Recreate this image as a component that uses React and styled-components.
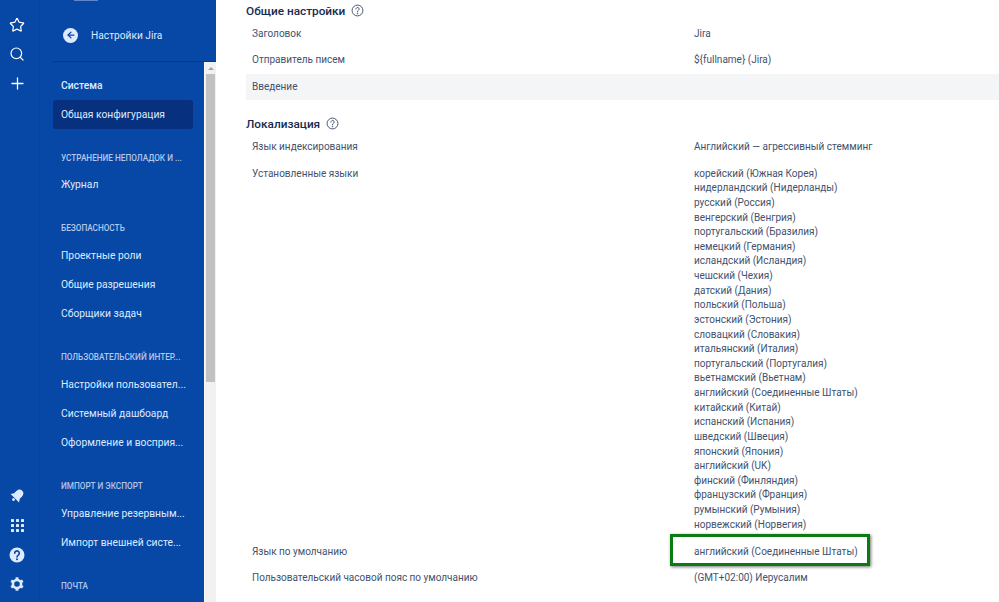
import React from "react";
import styled, { createGlobalStyle } from "styled-components";
import { Star, Search, Plus, ArrowLeft } from "lucide-react";

const Global = createGlobalStyle`
  html, body {
    margin: 0;
    padding: 0;
    background: #fff;
    font-family: Roboto, "Noto Sans", sans-serif;
  }
`;

const Page = styled.div`
  position: relative;
  display: flex;
  width: 999px;
  height: 602px;
  overflow: hidden;
`;

const Rail = styled.div`
  width: 40px;
  flex: none;
  background: #0747a6;
  box-shadow: inset -1px 0 0 #0a4299;
  display: flex;
  flex-direction: column;
  justify-content: space-between;
  padding: 10px 6px 3px 0;
  box-sizing: border-box;
`;

const RailCell = styled.div`
  height: 29.5px;
  display: flex;
  align-items: center;
  justify-content: center;
  color: #fff;
`;

const Side = styled.div`
  width: 176px;
  flex: none;
  display: flex;
  flex-direction: column;
`;

const SideHead = styled.div`
  height: 62px;
  box-sizing: border-box;
  background: #0747a6;
  display: flex;
  align-items: center;
  gap: 13px;
  padding: 8px 0 0 23px;
  color: #deebff;
  font-size: 10.2px;
  position: relative;
  overflow: hidden;
  &::before {
    content: "";
    position: absolute;
    left: 34px;
    top: 0;
    width: 24px;
    height: 1px;
    background: #5f87c6;
  }
  &::after {
    content: "";
    position: absolute;
    left: 13px;
    right: 0;
    bottom: 0;
    height: 1px;
    background: #07388a;
  }
`;

const BackDot = styled.div`
  width: 15px;
  height: 15px;
  border-radius: 50%;
  background: #deebff;
  color: #0747a6;
  display: flex;
  align-items: center;
  justify-content: center;
`;

const SideBody = styled.div`
  flex: 1;
  display: flex;
  min-height: 0;
`;

const NavList = styled.div`
  width: 164px;
  flex: none;
  background: #0747a6;
  padding: 8.6px 11px 0 13px;
  box-sizing: border-box;
  overflow: hidden;
`;

const NavItem = styled.div`
  height: 29.3px;
  display: flex;
  align-items: center;
  padding-left: 8px;
  border-radius: 3px;
  font-size: 10.3px;
  font-weight: ${(p) => (p.$strong ? 500 : 400)};
  color: #deebff;
  white-space: nowrap;
  background: ${(p) => (p.$active ? "#07317f" : "transparent")};
`;

const NavTitle = styled.div`
  height: 15px;
  margin: 21.25px 0 4.85px;
  padding-left: 8px;
  display: flex;
  align-items: center;
  font-size: 8.2px;
  font-weight: 500;
  color: #b3c8ea;
  white-space: nowrap;
`;

const Scrollbar = styled.div`
  width: 12px;
  flex: none;
  box-sizing: border-box;
  background: #f1f1f1;
  border-left: 1px solid #f8f8f8;
  display: flex;
  flex-direction: column;
  align-items: center;
`;

const ScrollArrow = styled.div`
  height: 12px;
  display: flex;
  align-items: center;
  justify-content: center;
  &::before {
    content: "";
    border-left: 3px solid transparent;
    border-right: 3px solid transparent;
    border-bottom: 3px solid #a3a3a3;
  }
`;

const ScrollThumb = styled.div`
  width: 9px;
  height: 308px;
  background: #c1c1c1;
`;

const Main = styled.div`
  flex: 1;
  min-width: 0;
  padding: 0 0 0 30px;
`;

const Heading = styled.div`
  height: 21px;
  display: flex;
  align-items: center;
  gap: 6px;
  margin-top: ${(p) => p.$top}px;
  font-size: 11.8px;
  font-weight: 500;
  color: #172b4d;
`;

const Row = styled.div`
  display: grid;
  grid-template-columns: 442px 1fr;
  padding: 6px 0 5.8px 6px;
  box-sizing: border-box;
  font-size: 10px;
  line-height: 14.63px;
  color: #42526e;
  background: ${(p) => (p.$shaded ? "#f4f5f7" : "transparent")};
`;

const LangList = styled.div`
  margin-bottom: 0.6px;
`;

const Highlight = styled.div`
  position: absolute;
  left: 670px;
  top: 534px;
  width: 200px;
  height: 32px;
  box-sizing: border-box;
  border: 3px solid #0a7a12;
  box-shadow: 1px 1px 3px rgba(0, 0, 0, 0.55);
`;

const Help = () => (
  <svg width="13" height="13" viewBox="0 0 24 24" fill="none" stroke="#42526e" strokeWidth="1.8">
    <circle cx="12" cy="12" r="10" />
    <path d="M9 9.3a3 3 0 1 1 4.6 2.5c-1 .7-1.6 1.3-1.6 2.6" strokeLinecap="round" />
    <circle cx="12" cy="17.6" r="0.6" fill="#42526e" />
  </svg>
);

const Bell = () => (
  <svg width="15" height="15" viewBox="0 0 16 16" fill="#deebff">
    <g transform="rotate(45 8 8)">
      <path d="M8 .8C5.2.8 3.8 3 3.8 5.6v3.2L1.6 12h12.8l-2.2-3.2V5.6C12.2 3 10.8.8 8 .8z" />
      <circle cx="8" cy="14" r="1.5" />
    </g>
  </svg>
);

const Apps = () => (
  <svg width="13" height="13" viewBox="0 0 13 13" fill="#deebff">
    {[0, 5, 10].flatMap((y) =>
      [0, 5, 10].map((x) => <rect key={x + "-" + y} x={x} y={y} width="3" height="3" rx="0.6" />)
    )}
  </svg>
);

const HelpSolid = () => (
  <svg width="16" height="16" viewBox="0 0 16 16">
    <circle cx="8" cy="8" r="7.5" fill="#deebff" />
    <path d="M5.7 6.2a2.3 2.3 0 1 1 3.6 1.9c-.8.5-1.3 1-1.3 1.9" fill="none" stroke="#0747a6" strokeWidth="1.6" strokeLinecap="round" />
    <circle cx="8" cy="12.2" r="1" fill="#0747a6" />
  </svg>
);

const Gear = () => (
  <svg width="14" height="14" viewBox="0 0 24 24">
    <circle cx="12" cy="12" r="7" fill="none" stroke="#deebff" strokeWidth="4.4" />
    {[0, 60, 120, 180, 240, 300].map((a) => (
      <rect key={a} x="9.5" y="0.5" width="5" height="5" fill="#deebff" transform={`rotate(${a} 12 12)`} />
    ))}
  </svg>
);

const languages = [
  "корейский (Южная Корея)",
  "нидерландский (Нидерланды)",
  "русский (Россия)",
  "венгерский (Венгрия)",
  "португальский (Бразилия)",
  "немецкий (Германия)",
  "исландский (Исландия)",
  "чешский (Чехия)",
  "датский (Дания)",
  "польский (Польша)",
  "эстонский (Эстония)",
  "словацкий (Словакия)",
  "итальянский (Италия)",
  "португальский (Португалия)",
  "вьетнамский (Вьетнам)",
  "английский (Соединенные Штаты)",
  "китайский (Китай)",
  "испанский (Испания)",
  "шведский (Швеция)",
  "японский (Япония)",
  "английский (UK)",
  "финский (Финляндия)",
  "французский (Франция)",
  "румынский (Румыния)",
  "норвежский (Норвегия)",
];

const nav = [
  { items: ["Система", "Общая конфигурация"] },
  { title: "УСТРАНЕНИЕ НЕПОЛАДОК И ...", items: ["Журнал"] },
  { title: "БЕЗОПАСНОСТЬ", items: ["Проектные роли", "Общие разрешения", "Сборщики задач"] },
  { title: "ПОЛЬЗОВАТЕЛЬСКИЙ ИНТЕР...", items: ["Настройки пользовател...", "Системный дашбоард", "Оформление и восприя..."] },
  { title: "ИМПОРТ И ЭКСПОРТ", items: ["Управление резервным...", "Импорт внешней систе..."] },
  { title: "ПОЧТА", items: [] },
];

export default function App() {
  return (
    <Page>
      <Global />
      <Rail>
        <div>
          <RailCell>
            <Star size={16} strokeWidth={1.8} />
          </RailCell>
          <RailCell>
            <Search size={16} strokeWidth={1.8} />
          </RailCell>
          <RailCell>
            <Plus size={19} strokeWidth={1.6} />
          </RailCell>
        </div>
        <div>
          <RailCell>
            <Bell />
          </RailCell>
          <RailCell>
            <Apps />
          </RailCell>
          <RailCell>
            <HelpSolid />
          </RailCell>
          <RailCell>
            <Gear />
          </RailCell>
        </div>
      </Rail>
      <Side>
        <SideHead>
          <BackDot>
            <ArrowLeft size={10} strokeWidth={3} />
          </BackDot>
          Настройки Jira
        </SideHead>
        <SideBody>
          <NavList>
            {nav.map((group, i) => (
              <div key={i}>
                {group.title && <NavTitle>{group.title}</NavTitle>}
                {group.items.map((item) => (
                  <NavItem key={item} $strong={item === "Система"} $active={item === "Общая конфигурация"}>
                    {item}
                  </NavItem>
                ))}
              </div>
            ))}
          </NavList>
          <Scrollbar>
            <ScrollArrow />
            <ScrollThumb />
          </Scrollbar>
        </SideBody>
      </Side>
      <Main>
        <Heading $top={0}>
          Общие настройки <Help />
        </Heading>
        <Row>
          <span>Заголовок</span>
          <span>Jira</span>
        </Row>
        <Row>
          <span>Отправитель писем</span>
          <span>{"${fullname} (Jira)"}</span>
        </Row>
        <Row $shaded>
          <span>Введение</span>
          <span />
        </Row>
        <Heading $top={13}>
          Локализация <Help />
        </Heading>
        <Row>
          <span>Язык индексирования</span>
          <span>Английский — агрессивный стемминг</span>
        </Row>
        <Row>
          <span>Установленные языки</span>
          <LangList>
            {languages.map((l) => (
              <div key={l}>{l}</div>
            ))}
          </LangList>
        </Row>
        <Row>
          <span>Язык по умолчанию</span>
          <span>английский (Соединенные Штаты)</span>
        </Row>
        <Row>
          <span>Пользовательский часовой пояс по умолчанию</span>
          <span>(GMT+02:00) Иерусалим</span>
        </Row>
      </Main>
      <Highlight />
    </Page>
  );
}
